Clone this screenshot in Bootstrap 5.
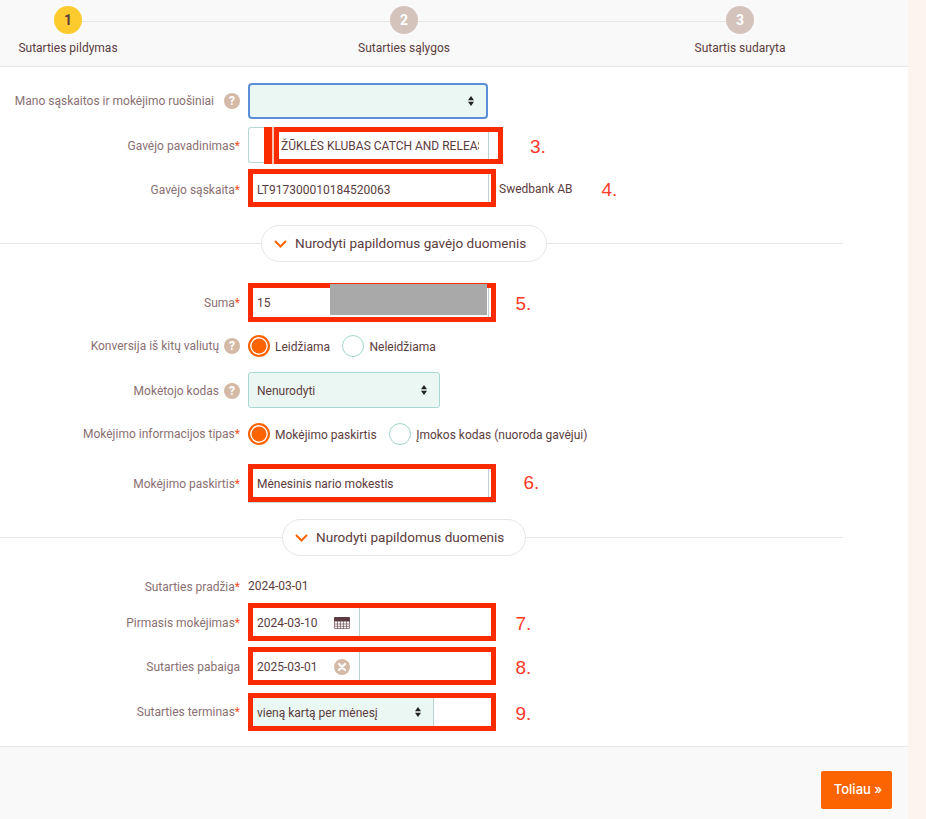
<!DOCTYPE html>
<html lang="lt">
<head>
<meta charset="utf-8">
<title>Sutarties pildymas</title>
<link href="https://cdn.jsdelivr.net/npm/bootstrap@5.3.0/dist/css/bootstrap.min.css" rel="stylesheet">
<style>
html,body{height:100%}
body{background:#fdf4ed;font-family:Roboto,"Liberation Sans",sans-serif;font-size:12px;color:#5c3c40;overflow:hidden}
.shell{width:908px;height:819px;background:#f9f9f9}
.steps{height:67px;border-bottom:1px solid #e8e6e1;padding-top:6px;padding-right:100px;position:relative}
.steps::before{content:"";position:absolute;left:68px;width:672px;top:21px;height:1px;background:#e6e6e6}
.step{width:136px;position:relative;text-align:center}
.dot{width:28px;height:28px;border-radius:50%;background:#d3c3bb;color:#fff;font-weight:700;font-size:14px;line-height:28px;margin:0 auto 5px}
.dot-on{background:#fdcb2d;color:#5c3c40}
.panel{background:#fff;padding:16px 0;height:680px;border-bottom:1px solid #e8e6e1}
.frow{height:36px;margin-top:8px}
.frow.m0{margin-top:0}
.frow.m10{margin-top:10px}
.frow.m12{margin-top:12px}
.frow.m13{margin-top:13px}
.frow.m22{margin-top:22px}
.lab{width:240px;margin-right:8px;flex:none;color:#8a7073;display:flex;justify-content:flex-end;align-items:center;padding-top:2px}
.lab b{color:#f4511e;font-weight:400}
.lab.flat{padding-top:0}
.hlp{width:16px;height:16px;border-radius:50%;background:#d3b9a6;color:#fff;font-weight:700;font-size:12px;line-height:16px;text-align:center;margin-left:5px;flex:none}
.hlp.wide{margin-left:10px}
.sel{width:240px;height:36px;border:1px solid #a9d8d2;border-radius:3px;background-color:#ebf7f2;font-size:12px;color:#5c3c40;padding:2px 8px 0;box-shadow:none;background-position:right 12px center;background-size:6px 10px;background-image:url("data:image/svg+xml,%3Csvg xmlns='http://www.w3.org/2000/svg' viewBox='0 0 6 10'%3E%3Cpath fill='%23222' d='M3 0l3 4.2H0zM3 10L0 5.8h6z'/%3E%3C/svg%3E")}
.sel-focus{border:2px solid #5b8fd9;border-radius:4px}
.sel-mid{width:192px}
.redbox{border:5px solid #fa2b00;height:38px;width:247.5px;background:#fff;flex:none;position:relative}
.redbox.up{margin-top:-3px}
.redbox.tall{height:39px;margin-top:1px}
.redbox.under{box-shadow:0 1px 0 #c3dedb}
.fld{height:100%;width:235.5px;border-right:1px solid #bcd3d3;padding:2px 0 0 4px;display:flex;align-items:center;white-space:nowrap;overflow:hidden}
.fld.low{padding-top:5px}
.fld.flat{padding-top:0}
.fld-short{width:106.5px;justify-content:space-between;padding-right:9px}
.sel-in{width:180.5px;height:100%;border:0;border-right:1px solid #bcd3d3;border-radius:0;padding:1px 0 0 4px;background-position:right 12px center}
.stub{width:16px;height:36px;border:1px solid #b5d9d5;border-right:0;border-radius:3px 0 0 3px;flex:none}
.strip{width:8px;height:37px;background:#fa2b00;flex:none}
.pale{width:2px;height:37px;background:#f8c4b6;flex:none}
.redbox-wide{width:229px;height:37px}
.fld-wide{width:209.5px;padding-left:2px}
.clip{display:block;width:198px;overflow:hidden}
.note{font-family:"Liberation Sans",sans-serif;font-size:19px;color:#fb3a2a;line-height:1;flex:none}
.n3{margin-left:27px;margin-top:2px}.n4{margin-top:1px}.n5{margin-left:20px;margin-top:2px}.n6{margin-left:28px;margin-top:-2px}.n7{margin-left:20px;margin-top:2px}
.bank{margin-left:3.5px;margin-top:-1px;flex:none;width:102.5px}
.hide{position:absolute;left:77px;top:-4px;width:157px;height:31px;background:#a9a9a9}
.sep{width:843px;height:37px;margin-top:18px}
.sep i{display:block;height:1px;background:#e6e6e6}
.sep .l1{width:261px}.sep .l2{width:282px}
.sep .rest{flex:1}
.pill{height:37px;width:286px;border:1px solid #e8e6e1;border-radius:19px;background:#fff;font-size:13.55px;color:#5c3c40;padding:0 0 0 12px;gap:8px}
.pill.short{width:244px}
.rad{width:22px;height:22px;margin:0;flex:none;border:1.5px solid #9fd6cd;border-radius:50%;background:#fff;appearance:none;display:block}
.rad:checked{border:2px solid #fb6400;background:#fb6400;box-shadow:inset 0 0 0 1.5px #fff}
.radlab{margin:0 12.5px 0 5px;padding-top:1px}
.foot{padding:24px 16px 0 0}
.go{width:71px;height:38px;background:#fb6400;color:#fff;border:0;border-radius:2px;font-family:Inter,Roboto,sans-serif;font-size:13px;font-weight:500;padding:0 0 0 3px}
.go:hover{background:#fb6400;color:#fff}
</style>
</head>
<body>
<div class="shell">
  <div class="steps d-flex justify-content-between">
    <div class="step"><div class="dot dot-on">1</div>Sutarties pildymas</div>
    <div class="step"><div class="dot">2</div>Sutarties sąlygos</div>
    <div class="step"><div class="dot">3</div>Sutartis sudaryta</div>
  </div>
  <div class="panel">
    <div class="frow d-flex align-items-center m0">
      <div class="lab flat">Mano sąskaitos ir mokėjimo ruošiniai<span class="hlp wide">?</span></div>
      <select class="form-select sel sel-focus" aria-label="Mano sąskaitos ir mokėjimo ruošiniai"><option></option></select>
    </div>
    <div class="frow d-flex align-items-center">
      <div class="lab">Gavėjo pavadinimas<b>*</b></div>
      <div class="stub"></div><div class="strip"></div><div class="pale"></div>
      <div class="redbox redbox-wide"><div class="fld fld-wide"><span class="clip">ŽŪKLĖS KLUBAS CATCH AND RELEAS</span></div></div>
      <div class="note n3">3.</div>
    </div>
    <div class="frow d-flex align-items-center">
      <div class="lab">Gavėjo sąskaita<b>*</b></div>
      <div class="redbox up"><div class="fld low">LT917300010184520063</div></div>
      <div class="bank">Swedbank AB</div>
      <div class="note n4">4.</div>
    </div>
    <div class="sep d-flex align-items-center">
      <i class="l1"></i>
      <div class="pill d-flex align-items-center"><svg width="13" height="8" viewBox="0 0 13 8"><path d="M1 1l5.5 5.5L12 1" fill="none" stroke="#fb6400" stroke-width="2"/></svg>Nurodyti papildomus gavėjo duomenis</div>
      <i class="rest"></i>
    </div>
    <div class="frow d-flex align-items-center m22">
      <div class="lab">Suma<b>*</b></div>
      <div class="redbox tall"><div class="fld flat">15</div><div class="hide"></div></div>
      <div class="note n5">5.</div>
    </div>
    <div class="frow d-flex align-items-center">
      <div class="lab flat">Konversija iš kitų valiutų<span class="hlp">?</span></div>
      <input class="rad" type="radio" name="k" checked aria-label="Leidžiama"><span class="radlab">Leidžiama</span>
      <input class="rad" type="radio" name="k" aria-label="Neleidžiama"><span class="radlab">Neleidžiama</span>
    </div>
    <div class="frow d-flex align-items-center">
      <div class="lab">Mokėtojo kodas<span class="hlp">?</span></div>
      <select class="form-select sel sel-mid" aria-label="Mokėtojo kodas"><option>Nenurodyti</option></select>
    </div>
    <div class="frow d-flex align-items-center">
      <div class="lab flat">Mokėjimo informacijos tipas<b>*</b></div>
      <input class="rad" type="radio" name="t" checked aria-label="Mokėjimo paskirtis"><span class="radlab">Mokėjimo paskirtis</span>
      <input class="rad" type="radio" name="t" aria-label="Įmokos kodas"><span class="radlab">Įmokos kodas (nuoroda gavėjui)</span>
    </div>
    <div class="frow d-flex align-items-center m13">
      <div class="lab">Mokėjimo paskirtis<b>*</b></div>
      <div class="redbox under"><div class="fld">Mėnesinis nario mokestis</div></div>
      <div class="note n6">6.</div>
    </div>
    <div class="sep d-flex align-items-center">
      <i class="l2"></i>
      <div class="pill short d-flex align-items-center"><svg width="13" height="8" viewBox="0 0 13 8"><path d="M1 1l5.5 5.5L12 1" fill="none" stroke="#fb6400" stroke-width="2"/></svg>Nurodyti papildomus duomenis</div>
      <i class="rest"></i>
    </div>
    <div class="frow d-flex align-items-center m12">
      <div class="lab">Sutarties pradžia<b>*</b></div>
      <div>2024-03-01</div>
    </div>
    <div class="frow d-flex align-items-center m0">
      <div class="lab">Pirmasis mokėjimas<b>*</b></div>
      <div class="redbox"><div class="fld fld-short">2024-03-10
        <svg width="16" height="12" viewBox="0 0 16 12"><path fill="#5c3c40" d="M0 1a1 1 0 0 1 1-1h14a1 1 0 0 1 1 1v3.5H0z"/><path fill="none" stroke="#7d6265" stroke-width=".8" d="M.5 4v7.5h15V4M.5 7h15M.5 9.3h15M3.5 4v8M6.5 4v8M9.5 4v8M12.5 4v8"/></svg>
      </div></div>
      <div class="note n7">7.</div>
    </div>
    <div class="frow d-flex align-items-center">
      <div class="lab">Sutarties pabaiga</div>
      <div class="redbox"><div class="fld fld-short">2025-03-01
        <svg width="16" height="16" viewBox="0 0 16 16"><circle cx="8" cy="8" r="8" fill="#d3b9a6"/><path d="M5 5l6 6M11 5l-6 6" stroke="#fff" stroke-width="2.2" stroke-linecap="round"/></svg>
      </div></div>
      <div class="note n7">8.</div>
    </div>
    <div class="frow d-flex align-items-center m10">
      <div class="lab flat">Sutarties terminas<b>*</b></div>
      <div class="redbox"><select class="form-select sel sel-in" aria-label="Sutarties terminas"><option>vieną kartą per mėnesį</option></select></div>
      <div class="note n7">9.</div>
    </div>
  </div>
  <div class="foot d-flex justify-content-end">
    <button type="button" class="btn go">Toliau »</button>
  </div>
</div>
<script src="https://cdn.jsdelivr.net/npm/bootstrap@5.3.0/dist/js/bootstrap.bundle.min.js"></script>
</body>
</html>
